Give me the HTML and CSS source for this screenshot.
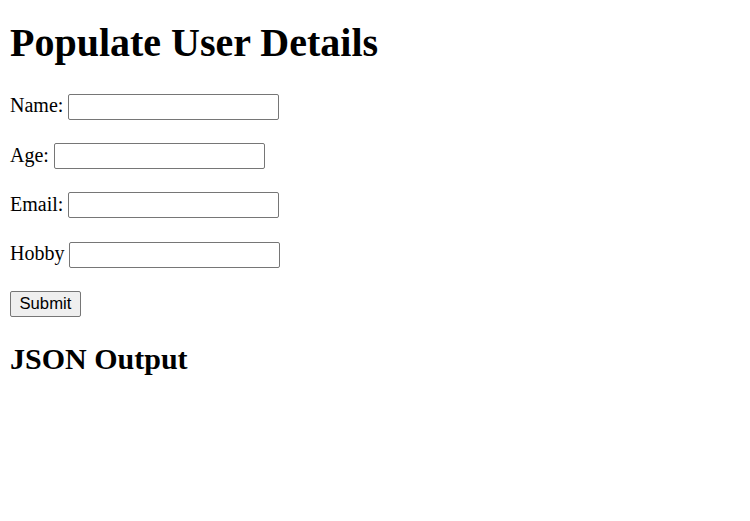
FILE: index.html
```html
<!DOCTYPE html>
<html>
<head>
<meta charset="utf-8">
<title>Populate User Details</title>
<link rel="stylesheet" href="styles.css">
</head>
<body>
<h1 class="title">Populate User Details</h1>
<form class="user-form">
  <div class="row"><label class="label" for="name">Name:</label><input class="field" type="text" id="name"></div>
  <div class="row"><label class="label" for="age">Age:</label><input class="field" type="text" id="age"></div>
  <div class="row"><label class="label" for="email">Email:</label><input class="field" type="text" id="email"></div>
  <div class="row"><label class="label" for="hobby">Hobby</label><input class="field" type="text" id="hobby"></div>
  <div class="row"><button class="submit" type="button">Submit</button></div>
</form>
<h2 class="subtitle">JSON Output</h2>
</body>
</html>
```
FILE: styles.css
```css
html, body {
  background: #ffffff;
}
body {
  margin: 0;
  padding: 0 10px;
  font-family: "Liberation Serif", "Times New Roman", serif;
  font-size: 20px;
  color: #000000;
}
.title {
  margin: 18.5px 0 0;
  font-size: 40px;
  font-weight: bold;
  line-height: normal;
}
.user-form {
  display: flex;
  flex-direction: column;
  gap: 23.4px;
  padding-top: 28.2px;
}
.row {
  display: flex;
  align-items: center;
  height: 26px;
}
.label {
  margin-right: 5px;
  margin-bottom: 2px;
  line-height: normal;
}
.field {
  box-sizing: border-box;
  width: 211px;
  height: 26px;
  margin: 0;
  padding: 1px 2px;
  border: 1px solid #767676;
  border-radius: 2px;
  background: #ffffff;
  font-family: "Liberation Sans", Arial, sans-serif;
  font-size: 16.67px;
}
.submit {
  box-sizing: border-box;
  height: 26px;
  margin: 0;
  padding: 0 8.5px;
  border: 1px solid #767676;
  border-radius: 2px;
  background: #efefef;
  color: #000000;
  font-family: "Liberation Sans", Arial, sans-serif;
  font-size: 16.67px;
}
.subtitle {
  margin: 25px 0 0;
  font-size: 30px;
  font-weight: bold;
  line-height: normal;
}
```
